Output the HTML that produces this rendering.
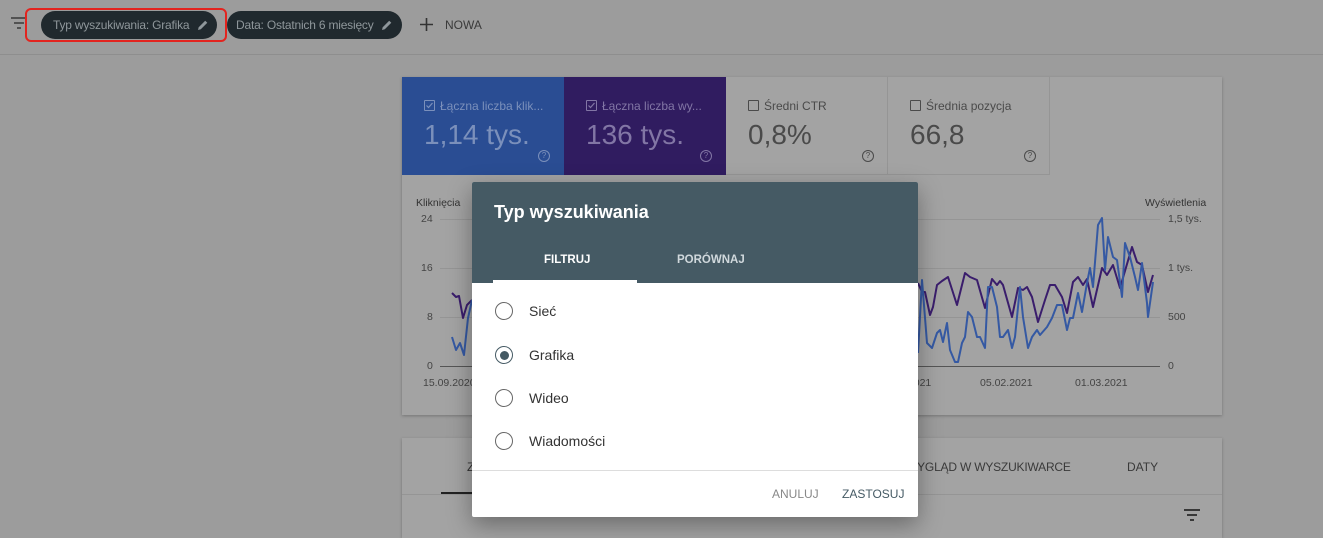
<!DOCTYPE html>
<html><head><meta charset="utf-8"><style>
body{margin:0;width:1323px;height:535px;overflow:hidden;background:#9c9c9c;font-family:"Liberation Sans",sans-serif;position:relative}
.a{position:absolute}
.chip{position:absolute;top:11px;height:28px;border-radius:14px;background:#20292e;color:#8f979b;font-size:12px;letter-spacing:-0.2px;line-height:28px;padding-left:12px;box-sizing:border-box;white-space:nowrap}
.tile{position:absolute;top:77px;height:98px;width:162px;box-sizing:border-box}
.tl{position:absolute;left:22px;top:22px;font-size:12px;white-space:nowrap}
.tv{position:absolute;left:22px;top:42px;font-size:28px}
.cb{display:inline-block;position:relative;width:9px;height:9px;border:1px solid currentColor;border-radius:1px;vertical-align:-1px;margin-right:5px}
.q{position:absolute;left:136px;top:73px;width:10px;height:10px;border:1px solid currentColor;border-radius:50%;font-size:8px;line-height:10px;text-align:center}
.radio{position:absolute;left:495px;width:16px;height:16px;border:1.5px solid #666;border-radius:50%}
.rl{position:absolute;left:529px;font-size:14px;color:#333}
</style></head><body>
<svg class="a" style="left:10px;top:16px" width="18" height="14"><path d="M1 2h16M4 7h10M7 12h4" stroke="#3a3a3a" stroke-width="1.6"/></svg>
<div class="chip" style="left:41px;width:176px">Typ wyszukiwania: Grafika<svg class="a" style="left:156px;top:8px" width="12" height="12"><path d="M1 11l0.7-2.8 6.5-6.5 2.1 2.1-6.5 6.5z" fill="#8f979b"/></svg></div>
<div class="a" style="left:25px;top:8px;width:202px;height:34px;border:2px solid #e3241f;border-radius:6px;box-sizing:border-box"></div>
<div class="chip" style="left:227px;width:175px;padding-left:9px">Data: Ostatnich 6 miesięcy<svg class="a" style="left:154px;top:8px" width="12" height="12"><path d="M1 11l0.7-2.8 6.5-6.5 2.1 2.1-6.5 6.5z" fill="#8f979b"/></svg></div>
<svg class="a" style="left:419px;top:17px" width="15" height="15"><path d="M7.5 1v13M1 7.5h13" stroke="#333" stroke-width="1.6"/></svg>
<div class="a" style="left:445px;top:18px;font-size:12px;color:#3a3a3a">NOWA</div>
<div class="a" style="left:0;top:54px;width:1323px;height:1px;background:#8e8e8e"></div>
<div class="a" style="left:402px;top:77px;width:820px;height:338px;background:#a3a3a3;box-shadow:0 1px 3px rgba(0,0,0,.25)"></div>
<div class="tile" style="left:402px;background:#2a4d93;color:#7b90bb"><div class="tl"><span class="cb"><svg class="a" style="left:0;top:0" width="9" height="9"><path d="M1.5 4.5l2 2 4-4.5" stroke="currentColor" fill="none" stroke-width="1.2"/></svg></span>Łączna liczba klik...</div><div class="tv">1,14 tys.</div><div class="q">?</div></div>
<div class="tile" style="left:564px;background:#301c60;color:#8276a5"><div class="tl"><span class="cb"><svg class="a" style="left:0;top:0" width="9" height="9"><path d="M1.5 4.5l2 2 4-4.5" stroke="currentColor" fill="none" stroke-width="1.2"/></svg></span>Łączna liczba wy...</div><div class="tv">136 tys.</div><div class="q">?</div></div>
<div class="tile" style="left:726px;color:#4a4a4a;border-right:1px solid #959595;border-bottom:1px solid #959595"><div class="tl"><span class="cb"></span>Średni CTR</div><div class="tv">0,8%</div><div class="q">?</div></div>
<div class="tile" style="left:888px;color:#4a4a4a;border-right:1px solid #959595;border-bottom:1px solid #959595"><div class="tl"><span class="cb"></span>Średnia pozycja</div><div class="tv">66,8</div><div class="q">?</div></div>
<div class="a" style="left:416px;top:197px;font-size:10.5px;color:#333">Kliknięcia</div>
<div class="a" style="left:1145px;top:197px;font-size:10.5px;color:#333">Wyświetlenia</div>
<div class="a" style="left:421px;top:213px;font-size:10.5px;color:#444">24</div>
<div class="a" style="left:421px;top:262px;font-size:10.5px;color:#444">16</div>
<div class="a" style="left:427px;top:311px;font-size:10.5px;color:#444">8</div>
<div class="a" style="left:427px;top:360px;font-size:10.5px;color:#444">0</div>
<div class="a" style="left:1168px;top:213px;font-size:10.5px;color:#444">1,5 tys.</div>
<div class="a" style="left:1168px;top:262px;font-size:10.5px;color:#444">1 tys.</div>
<div class="a" style="left:1168px;top:311px;font-size:10.5px;color:#444">500</div>
<div class="a" style="left:1168px;top:360px;font-size:10.5px;color:#444">0</div>
<div class="a" style="left:423px;top:377px;font-size:10.5px;color:#444">15.09.2020</div>
<div class="a" style="left:905px;top:377px;font-size:10.5px;color:#444">.2021</div>
<div class="a" style="left:980px;top:377px;font-size:10.5px;color:#444">05.02.2021</div>
<div class="a" style="left:1075px;top:377px;font-size:10.5px;color:#444">01.03.2021</div>
<svg class="a" style="left:0;top:0" width="1323" height="535">
<g stroke="#959595" stroke-width="1"><path d="M440 219.5H1160M440 268.5H1160M440 317.5H1160"/></g>
<path d="M440 366.5H1160" stroke="#555" stroke-width="1"/>
<g fill="none" stroke-width="2" stroke-linejoin="round">
<polyline stroke="#3a1d6c" points="452,293 456,297 459,296 463,318 467,305 472,300"/>
<polyline stroke="#3559a3" points="452,337 456,350 460,343 464,355 468,318 472,300"/>
<polyline stroke="#3a1d6c" points="918,283 922,292 925,292 930,315 933,307 937,285 942,281 948,277 957,305 965,273 970,277 977,280 985,308 992,279 997,285 1000,281 1003,285 1012,317 1018,288 1023,290 1027,287 1032,297 1038,322 1045,300 1050,285 1055,285 1062,297 1067,313 1073,282 1078,277 1083,285 1087,279 1093,307 1102,268 1107,275 1113,265 1120,288 1132,247 1137,262 1142,265 1148,292 1153,275"/>
<polyline stroke="#3559a3" points="918,353 922,280 927,343 932,348 937,333 940,330 943,342 947,323 950,350 955,362 958,362 962,343 965,337 968,312 972,317 977,337 980,337 985,348 988,287 992,287 997,307 1000,337 1003,337 1008,330 1012,348 1015,337 1020,287 1023,317 1028,348 1032,337 1037,330 1040,335 1047,327 1052,318 1057,305 1062,305 1067,330 1070,318 1073,318 1078,293 1082,312 1087,283 1090,268 1093,287 1098,225 1102,218 1105,270 1108,237 1113,257 1117,260 1122,297 1125,243 1130,257 1135,277 1138,290 1142,263 1147,303 1148,317 1153,282"/>
</g></svg>
<div class="a" style="left:402px;top:438px;width:820px;height:100px;background:#a3a3a3;box-shadow:0 1px 3px rgba(0,0,0,.25)"></div>
<div class="a" style="left:402px;top:494px;width:820px;height:1px;background:#959595"></div>
<div class="a" style="left:441px;top:492px;width:40px;height:2px;background:#222"></div>
<div class="a" style="left:467px;top:460px;font-size:12px;color:#333">Z</div>
<div class="a" style="left:906px;top:460px;font-size:12px;letter-spacing:-0.2px;color:#3a3a3a">WYGLĄD W WYSZUKIWARCE</div>
<div class="a" style="left:1127px;top:460px;font-size:12px;color:#3a3a3a">DATY</div>
<svg class="a" style="left:1183px;top:508px" width="18" height="14"><path d="M1 2h16M4 7h10M7 12h4" stroke="#2a2a2a" stroke-width="1.8"/></svg>
<div class="a" style="left:472px;top:182px;width:446px;height:335px;background:#fff;box-shadow:0 8px 24px rgba(0,0,0,.35);border-radius:2px;overflow:hidden">
<div class="a" style="left:0;top:0;width:446px;height:101px;background:#455a64"></div>
<div class="a" style="left:22px;top:20px;font-size:18px;font-weight:bold;color:#fff">Typ wyszukiwania</div>
<div class="a" style="left:72px;top:72px;font-size:11.5px;font-weight:bold;color:#fff">FILTRUJ</div>
<div class="a" style="left:205px;top:72px;font-size:11.5px;font-weight:bold;color:#d0d8dc">PORÓWNAJ</div>
<div class="a" style="left:21px;top:98px;width:144px;height:3px;background:#fff"></div>
<div class="a" style="left:0;top:288px;width:446px;height:1px;background:#ddd"></div>
<div class="a" style="left:300px;top:305px;font-size:12px;color:#888">ANULUJ</div>
<div class="a" style="left:370px;top:305px;font-size:12px;color:#455a64">ZASTOSUJ</div>
</div>
<div class="radio" style="top:302px"></div><div class="rl" style="top:303px">Sieć</div>
<div class="radio" style="top:346px;border-color:#455a64"><div style="margin:3.5px;width:9px;height:9px;border-radius:50%;background:#455a64"></div></div><div class="rl" style="top:347px">Grafika</div>
<div class="radio" style="top:389px"></div><div class="rl" style="top:390px">Wideo</div>
<div class="radio" style="top:432px"></div><div class="rl" style="top:433px">Wiadomości</div>
</body></html>
